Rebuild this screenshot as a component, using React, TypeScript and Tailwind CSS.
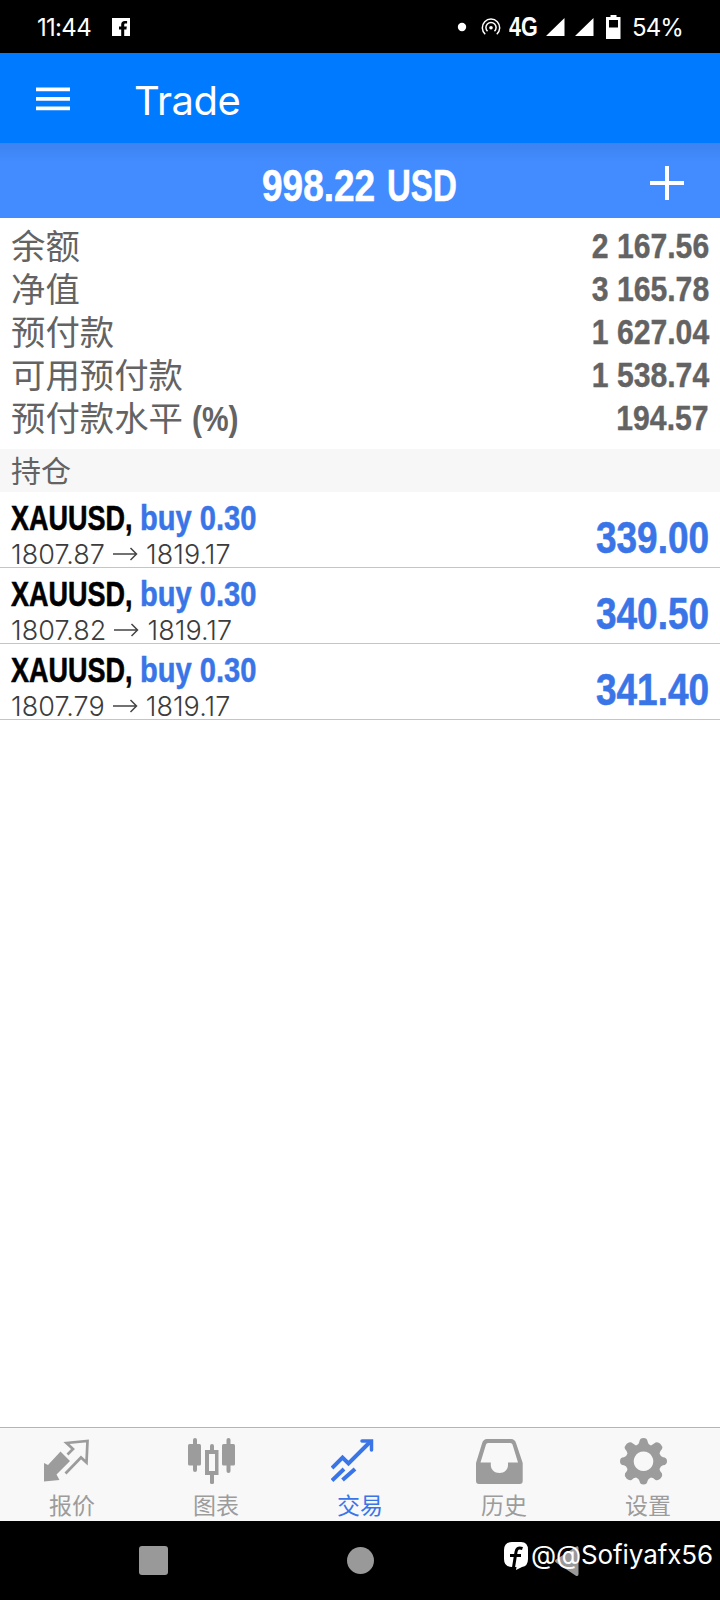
import type { ReactNode } from 'react';

interface Position {
  symbol: string;
  side: string;
  open: string;
  current: string;
  profit: string;
}

const summary = [
  { label: '余额', value: '2 167.56' },
  { label: '净值', value: '3 165.78' },
  { label: '预付款', value: '1 627.04' },
  { label: '可用预付款', value: '1 538.74' },
  { label: '预付款水平', suffix: '(%)', value: '194.57' },
];

const positions: Position[] = [
  { symbol: 'XAUUSD,', side: 'buy 0.30', open: '1807.87', current: '1819.17', profit: '339.00' },
  { symbol: 'XAUUSD,', side: 'buy 0.30', open: '1807.82', current: '1819.17', profit: '340.50' },
  { symbol: 'XAUUSD,', side: 'buy 0.30', open: '1807.79', current: '1819.17', profit: '341.40' },
];

// Bold sans squeezed horizontally, used for all amounts and symbols
function Condensed({ className, children }: { className: string; children: ReactNode }) {
  return (
    <span className={`inline-block font-['Liberation_Sans',sans-serif] font-bold whitespace-nowrap ${className}`}>
      {children}
    </span>
  );
}

function StatusBar() {
  return (
    <div className="flex h-[53px] items-center bg-black pl-[37px] text-white">
      <span className="mt-px w-[75px] text-[24px] leading-[53px] tracking-[-0.7px]">11:44</span>
      <svg width="18" height="18" viewBox="0 0 18 18" fill="#fff">
        <path d="M0 0h18v18h-5.8v-6.6h2.2l.4-2.8h-2.6V7c0-.9.4-1.4 1.4-1.4h1.5V3.1h-2.3C10.400 3.100 9.200 4.400 9.200 6.600v2H7v2.800h2.200V18H0z" />
      </svg>
      <svg className="ml-[327px]" width="10" height="10" viewBox="0 0 10 10">
        <circle cx="5" cy="5" r="4.200" fill="#fff" />
      </svg>
      <svg className="ml-[14px]" width="20" height="18" viewBox="0 0 20 18" fill="none" stroke="#fff" strokeWidth="1.500">
        <path d="M4.200 16.200a8.700 8.700 0 1 1 11.600 0" />
        <path d="M6.500 13.200a5.100 5.100 0 1 1 7 0" />
        <circle cx="10" cy="9.800" r="1.800" fill="#fff" stroke="none" />
      </svg>
      <Condensed className="ml-[8px] w-[37px] origin-left scale-x-[0.77] text-[28px] leading-[53px]">4G</Condensed>
      <svg width="48" height="18" viewBox="0 0 48 18" fill="#fff">
        <path d="M0 18 18.500 0v18zM29 18 47.500 0v18z" />
      </svg>
      <svg className="ml-[12px]" width="15" height="24" viewBox="0 0 15 24">
        <path fill="#fff" fillRule="evenodd" d="M4.500 0h6v2H14.500v22H0V2h4.500zM3 5v7.500h9V5z" />
      </svg>
      <span className="mt-px ml-[11px] text-[24px] leading-[53px] tracking-[-0.9px]">54%</span>
    </div>
  );
}

function PositionRow({ position }: { position: Position }) {
  return (
    <div className="flex h-[76px] justify-between border-b border-[#c3c5ca] px-[11px]">
      <div>
        <div className="mt-[7px] flex h-[38px] text-[35.5px] leading-[38px]">
          <Condensed className="w-[129px] origin-left scale-x-[0.76] text-black [-webkit-text-stroke:0.6px]">{position.symbol}</Condensed>
          <Condensed className="origin-left scale-x-[0.82] text-[#3a75e8] [-webkit-text-stroke:0.5px]">{position.side}</Condensed>
        </div>
        <div className="mt-[3px] flex h-[28px] items-center text-[27px] leading-[30px] font-light tracking-[0.05px] text-[#3c3c3c]">
          <span className="mt-[2px]">{position.open}</span>
          <svg className="mx-[8px]" width="25" height="14" viewBox="0 0 25 14" fill="none" stroke="#444" strokeWidth="1.500">
            <path d="M0 7h23.500M17.500 1l6 6-6 6" />
          </svg>
          <span className="mt-[2px]">{position.current}</span>
        </div>
      </div>
      <Condensed className="mt-[21px] origin-right scale-x-[0.85] text-[43.5px] leading-[50px] text-[#3a75e8] [-webkit-text-stroke:0.6px]">
        {position.profit}
      </Condensed>
    </div>
  );
}

function Tab({ label, active, children }: { label: string; active?: boolean; children: ReactNode }) {
  return (
    <div className={`flex flex-1 flex-col ${active ? 'text-[#3a75e8]' : 'text-[#9c9c9c]'}`}>
      <div className="ml-[43px] h-[64px] pt-[9px]">{children}</div>
      <span className="h-[30px] text-center text-[23px] leading-[31px]">{label}</span>
    </div>
  );
}

function TabBar() {
  return (
    <div className="flex h-[94px] border-t border-[#b4b4b4] bg-[#f8f8f8]">
      <Tab label="报价">
        <svg width="48" height="48" viewBox="0 0 48 48">
          <path fill="currentColor" d="M17.500 14.500 27 24 13.500 37.500 16.500 43 1 44.500V26l4 2z" />
          <path fill="none" stroke="currentColor" strokeWidth="2.700" d="M24.500 17.500 30 12 23.500 6 44.500 4 43.500 25.500 38 20.500 22.500 36.500" />
        </svg>
      </Tab>
      <Tab label="图表">
        <svg width="48" height="48" viewBox="0 0 48 48" fill="currentColor">
          <rect x="6" y="1" width="4" height="34" rx="2" />
          <rect x="1" y="7" width="13" height="21.500" rx="1.500" />
          <rect x="39.500" y="1" width="4" height="35" rx="2" />
          <rect x="35" y="7" width="13" height="21.500" rx="1.500" />
          <rect x="23" y="7" width="4" height="8" rx="2" />
          <rect x="23" y="36" width="4" height="11" rx="1.500" />
          <path fillRule="evenodd" d="M18 13h13.500v25H18zM22 17v17H28V17z" />
        </svg>
      </Tab>
      <Tab label="交易" active>
        <svg width="48" height="48" viewBox="0 0 48 48" fill="none" stroke="currentColor" strokeWidth="4">
          <path d="M1 31 11.500 20.500 17.500 26.500 39.500 4.500" />
          <path d="M31 4H40.500V13" strokeLinecap="round" strokeWidth="3.500" />
          <path d="M1 43.500 13 32M11.500 43 24 32" />
        </svg>
      </Tab>
      <Tab label="历史">
        <svg width="48" height="48" viewBox="0 0 48 48">
          <path
            fill="currentColor"
            fillRule="evenodd"
            d="M12 2h24q4 0 5.200 4.500L47.700 26v18q0 3-3 3H4q-3 0-3-3V26L7 6.500Q8.200 2 12 2zM13 6Q11.500 6 11 7.500L5.500 25.500H15.800V28C15.800 32.500 19.500 36 24.500 36S33 32.500 33 28V25.500H43L37.500 7.500Q37 6 35.500 6z"
          />
        </svg>
      </Tab>
      <Tab label="设置">
        <svg width="48" height="48" viewBox="0 0 48 48" fill="currentColor">
          <path
            fillRule="evenodd"
            d="M20.500 4Q21 1 24.500 1T28.500 4Q29 7.500 32 8.500Q34.500 7 36.500 5.500Q39 4.500 41.500 7T43 12Q40.500 14.500 40.500 16.500Q41.500 19.500 44 20.200Q48 20.500 48 24.200T44 28.200Q41.500 29 40.500 32Q40.500 34 43 36.500Q44 39 41.500 41.500T36.500 43Q34.500 40.500 32 40.500Q29 41.500 28.500 44Q28 47.500 24.500 47.500T20.500 44Q20 41.500 17 40.500Q14.500 40.500 12.500 43Q10 44 7.500 41.500T6 36.500Q8.500 34 8.500 32Q7.500 29 5 28.200Q1 28 1 24.200T5 20.200Q7.500 19.500 8.500 16.500Q8.500 14.500 6 12Q5 9.500 7.500 7T12.500 5.500Q14.500 7 17 8.500Q20 7.500 20.500 4zM24.500 14.500a9.800 9.800 0 1 0 .01 0z"
          />
        </svg>
      </Tab>
    </div>
  );
}

function NavigationBar() {
  return (
    <div className="relative h-[79px] bg-black">
      <svg className="block" width="720" height="79" viewBox="0 0 720 79" fill="#999">
        <rect x="139" y="25" width="29" height="29" rx="3" />
        <circle cx="360.500" cy="39.500" r="13.500" />
        <path d="M578.500 27v26q0 3-3 1.500L556 41.500q-2-1.500 0-3L575.500 26q3-2 3 1z" />
      </svg>
      {/* account handle sits over the back button */}
      <div className="absolute top-[17px] left-[504px] flex h-[34px] text-white">
        <svg className="mt-[4px]" width="25" height="29" viewBox="0 0 25 29">
          <path fill="#fff" d="M8 0h9q7 0 7 8v9q0 7-6 8l-6 3 .5-3H8q-8 0-8-8V8q0-8 8-8z" />
          <path fill="none" stroke="#000" strokeWidth="3" d="M18.500 6.500C14 5 12.500 7 12 10L9.500 25.500M6 13.500h11" />
        </svg>
        <span className="ml-[2px] text-[26px] leading-[34px] tracking-[-0.1px] whitespace-nowrap">@@Sofiyafx56</span>
      </div>
    </div>
  );
}

export default function App() {
  return (
    <div className="flex h-[1600px] w-[720px] flex-col overflow-hidden bg-white font-['Inter','Noto_Sans_CJK_SC',sans-serif]">
      <StatusBar />

      <header className="flex h-[90px] items-center bg-[#007aff] pl-[36px] text-white">
        <svg className="mt-[2px]" width="34" height="24" viewBox="0 0 34 24" fill="#fff">
          <path d="M0 0.500h34v3.800H0zM0 10h34v3.800H0zM0 19.500h34v3.800H0z" />
        </svg>
        <h1 className="mt-[5px] ml-[64px] text-[40px] leading-[50px] tracking-[-0.5px]">Trade</h1>
      </header>

      <div className="flex h-[75px] items-center bg-linear-to-b from-[#3d83f0] to-[#428cff] to-25% pl-[262px] text-white">
        <Condensed className="mt-[11px] w-[125px] origin-left scale-x-[0.85] text-[43.5px] leading-[50px] [-webkit-text-stroke:0.6px]">998.22</Condensed>
        <Condensed className="mt-[11px] w-[80px] origin-left scale-x-[0.76] text-[43.5px] leading-[50px] [-webkit-text-stroke:0.6px]">USD</Condensed>
        <svg className="mt-[4px] ml-[183px]" width="34" height="34" viewBox="0 0 34 34" stroke="#fff" strokeWidth="4">
          <path d="M0 17h34M17 0v34" />
        </svg>
      </div>

      <div className="h-[231px] px-[11px] pt-[7px] text-[#636363]">
        {summary.map((row) => (
          <div key={row.label} className="flex h-[43px] items-center justify-between">
            <span className="text-[34.4px] leading-[43px]">
              {row.label}
              {row.suffix && <Condensed className="ml-[9px] origin-left scale-x-[0.87]">{row.suffix}</Condensed>}
            </span>
            <Condensed className="origin-right scale-x-[0.85] text-[35.5px] leading-[43px] [-webkit-text-stroke:0.4px]">{row.value}</Condensed>
          </div>
        ))}
      </div>

      <div className="h-[43px] bg-[#f7f7f7] pl-[11px] text-[30px] leading-[44px] text-[#636363]">持仓</div>

      <div className="flex-1">
        {positions.map((position) => (
          <PositionRow key={position.open} position={position} />
        ))}
      </div>

      <TabBar />
      <NavigationBar />
    </div>
  );
}
